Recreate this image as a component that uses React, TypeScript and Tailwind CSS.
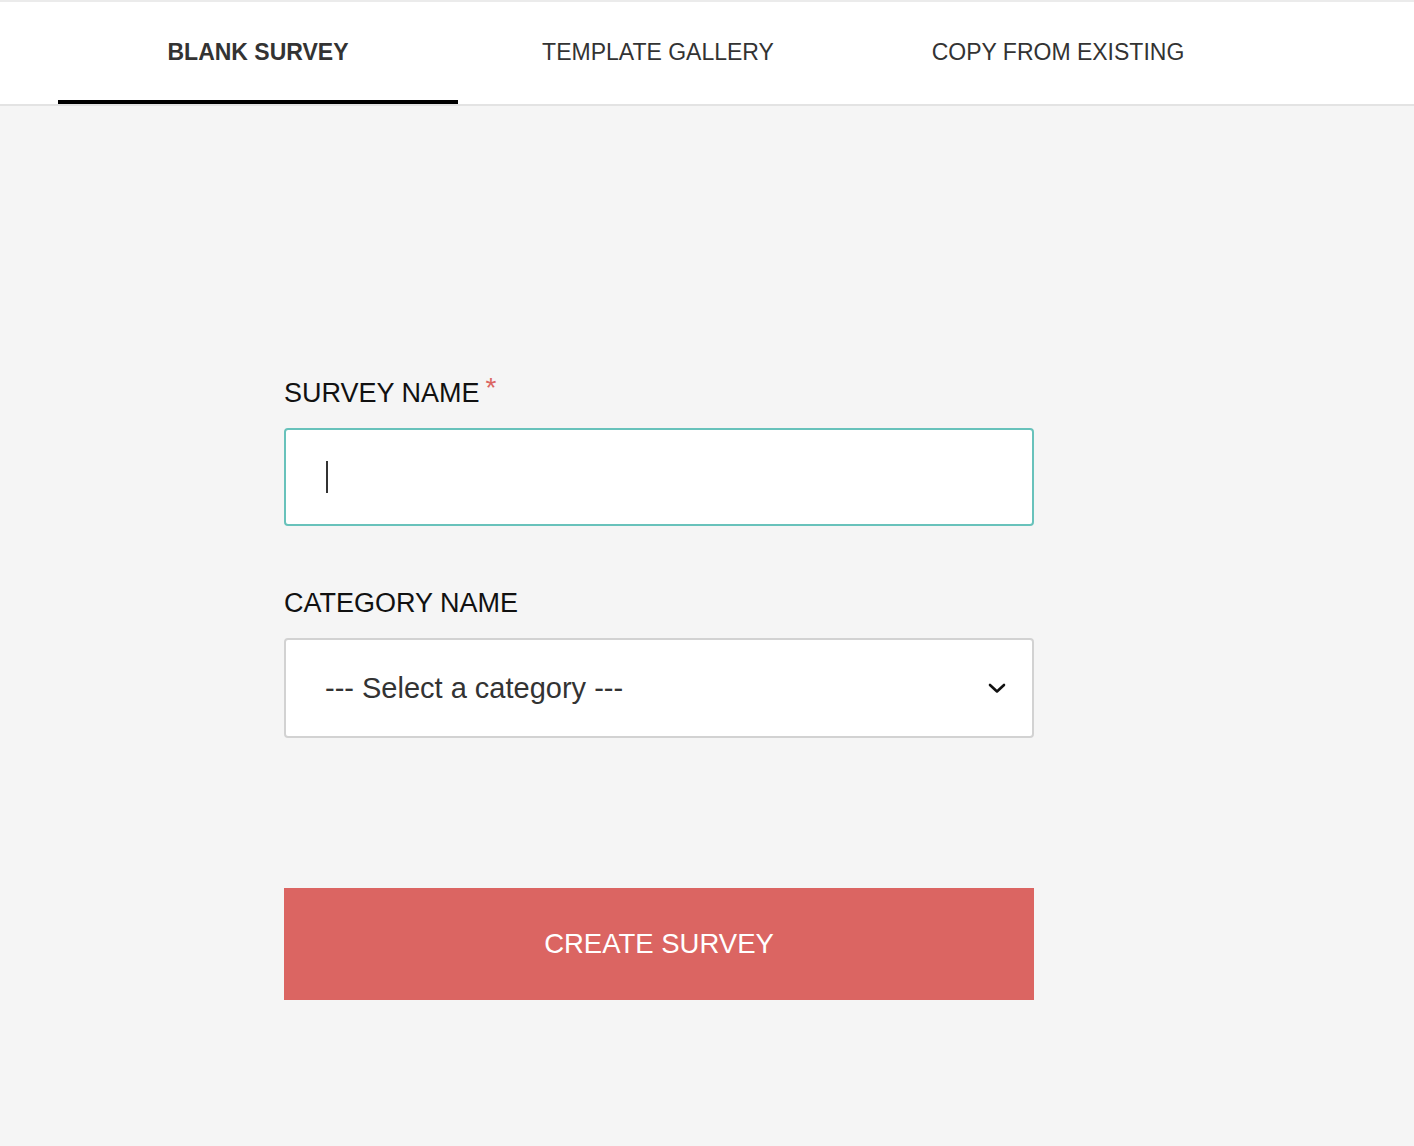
import { useState } from 'react';

const tabs = ['BLANK SURVEY', 'TEMPLATE GALLERY', 'COPY FROM EXISTING'];

export default function App() {
  const [activeTab, setActiveTab] = useState(0);

  return (
    <div
      className="min-h-[1146px] bg-[#f5f5f5]"
      style={{ fontFamily: '"Liberation Sans", Arial, sans-serif' }}
    >
      {/* Tabs */}
      <div className="border-t-2 border-b-2 border-t-[#ebebeb] border-b-[#e3e3e3] bg-white">
        <div className="ml-[58px] flex w-[1200px]">
          {tabs.map((tab, i) => (
            <button
              key={tab}
              onClick={() => setActiveTab(i)}
              className={`flex h-[102px] w-[400px] items-center justify-center border-b-4 pt-[2px] text-[23px] leading-[23px] text-[#333] ${
                activeTab === i
                  ? 'border-black font-bold'
                  : 'border-transparent font-normal'
              }`}
            >
              {tab}
            </button>
          ))}
        </div>
      </div>

      {/* Form */}
      <div className="ml-[284px] w-[750px] pt-[272px]">
        <label className="flex items-start text-[27px] leading-[30px] text-[#111]">
          SURVEY NAME
          <span className="ml-[6px] -mt-[4px] text-[28px] leading-[28px] text-[#db6562]">
            *
          </span>
        </label>
        <div className="mt-[20px] flex h-[98px] items-center rounded-[4px] border-2 border-[#68c2bb] bg-white pl-[40px]">
          <span className="block h-[32px] w-[2px] bg-[#333]" />
        </div>

        <label className="mt-[62px] block text-[27px] leading-[30px] text-[#111]">
          CATEGORY NAME
        </label>
        <div className="mt-[20px] flex h-[100px] items-center justify-between rounded-[4px] border-2 border-[#d2d2d2] bg-white pl-[39px] pr-[26px]">
          <span className="text-[29px] leading-[30px] text-[#333]">
            --- Select a category ---
          </span>
          <svg width="18" height="12" viewBox="0 0 18 12" fill="none">
            <polyline
              points="2,3 9,9.5 16,3"
              stroke="#111"
              strokeWidth="2.6"
              strokeLinecap="round"
              strokeLinejoin="round"
            />
          </svg>
        </div>

        <button className="mt-[150px] flex h-[112px] w-full items-center justify-center bg-[#db6562] text-[27.5px] leading-[30px] text-white">
          CREATE SURVEY
        </button>
      </div>
    </div>
  );
}
